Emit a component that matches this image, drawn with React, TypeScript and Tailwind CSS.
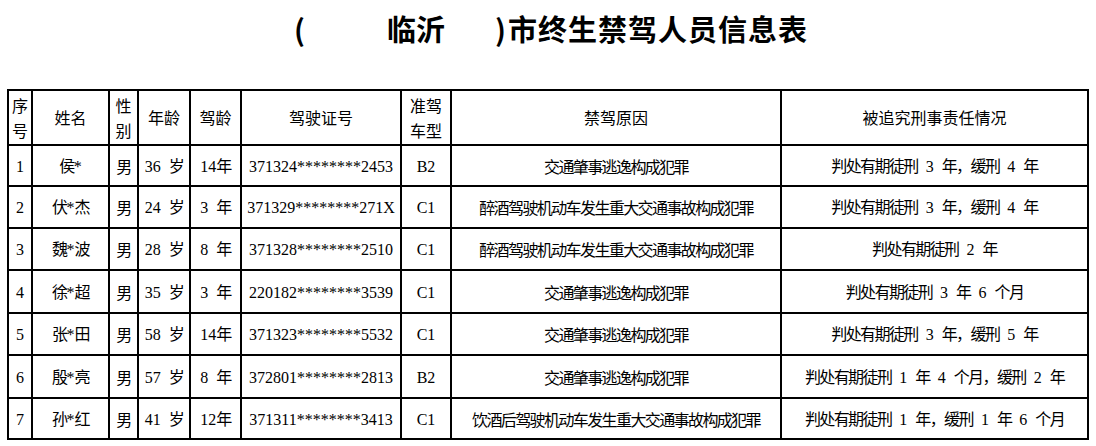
import React from 'react';

type Row = {
  no: string;
  name: string;
  sex: string;
  age: string;
  years: string;
  license: string;
  type: string;
  reason: string;
  penalty: string;
};

const rows: Row[] = [
  { no: '1', name: '侯*', sex: '男', age: '36 岁', years: '14年', license: '371324********2453', type: 'B2', reason: '交通肇事逃逸构成犯罪', penalty: '判处有期徒刑 3 年，缓刑 4 年' },
  { no: '2', name: '伏*杰', sex: '男', age: '24 岁', years: '3 年', license: '371329********271X', type: 'C1', reason: '醉酒驾驶机动车发生重大交通事故构成犯罪', penalty: '判处有期徒刑 3 年，缓刑 4 年' },
  { no: '3', name: '魏*波', sex: '男', age: '28 岁', years: '8 年', license: '371328********2510', type: 'C1', reason: '醉酒驾驶机动车发生重大交通事故构成犯罪', penalty: '判处有期徒刑 2 年' },
  { no: '4', name: '徐*超', sex: '男', age: '35 岁', years: '3 年', license: '220182********3539', type: 'C1', reason: '交通肇事逃逸构成犯罪', penalty: '判处有期徒刑 3 年 6 个月' },
  { no: '5', name: '张*田', sex: '男', age: '58 岁', years: '14年', license: '371323********5532', type: 'C1', reason: '交通肇事逃逸构成犯罪', penalty: '判处有期徒刑 3 年，缓刑 5 年' },
  { no: '6', name: '殷*亮', sex: '男', age: '57 岁', years: '8 年', license: '372801********2813', type: 'B2', reason: '交通肇事逃逸构成犯罪', penalty: '判处有期徒刑 1 年 4 个月，缓刑 2 年' },
  { no: '7', name: '孙*红', sex: '男', age: '41 岁', years: '12年', license: '371311********3413', type: 'C1', reason: '饮酒后驾驶机动车发生重大交通事故构成犯罪', penalty: '判处有期徒刑 1 年，缓刑 1 年 6 个月' },
];

const rowHeights = ['h-[41px]', 'h-[42px]', 'h-[42px]', 'h-[43px]', 'h-[42px]', 'h-[43px]', 'h-[41px]'];

const th = 'border-2 border-black p-0 text-center align-middle font-normal';
const td = 'border-2 border-black p-0 text-center align-middle whitespace-nowrap';

// half-width runs (digits, *, spaces) in a serif face, CJK runs condensed
function Mixed({ text }: { text: string }) {
  const parts = text.match(/[\x00-\x7f]+|[^\x00-\x7f]+/g) ?? [];
  return (
    <>
      {parts.map((p, i) =>
        /^[\x00-\x7f]/.test(p) ? (
          <span key={i} className="font-['Liberation_Serif',serif] tracking-normal [word-spacing:4px]">{p}</span>
        ) : (
          <span key={i} className="tracking-[-1.6px]">{p}</span>
        )
      )}
    </>
  );
}

export default function App() {
  return (
    <div className="w-[1096px] h-[446px] bg-white text-black overflow-hidden">
      {/* title */}
      <div className="h-[56px] flex items-center pl-[294px] text-[29px] font-bold leading-none font-['Noto_Sans_CJK_SC',sans-serif]">
        <span>(</span>
        <span className="ml-[82px]">临沂</span>
        <span className="ml-[50px]">)</span>
        <span className="ml-[2px] tracking-[1px]">市终生禁驾人员信息表</span>
      </div>

      <table className="ml-[7px] mt-[33px] w-[1082px] table-fixed border-collapse">
        <colgroup>
          <col className="w-[24px]" />
          <col className="w-[77px]" />
          <col className="w-[29px]" />
          <col className="w-[52px]" />
          <col className="w-[51px]" />
          <col className="w-[160px]" />
          <col className="w-[50px]" />
          <col className="w-[330px]" />
          <col className="w-[307px]" />
        </colgroup>
        <thead>
          <tr className="h-[55px] text-[16px] leading-[25px] font-['Noto_Sans_CJK_SC',sans-serif]">
            <th className={th}>序<br />号</th>
            <th className={th}>姓名</th>
            <th className={th}>性<br />别</th>
            <th className={th}>年龄</th>
            <th className={th}>驾龄</th>
            <th className={th}>驾驶证号</th>
            <th className={th}>准驾<br />车型</th>
            <th className={th}>禁驾原因</th>
            <th className={th}>被追究刑事责任情况</th>
          </tr>
        </thead>
        <tbody className="text-[16px] leading-[20px] font-['Noto_Sans_CJK_SC',sans-serif]">
          {rows.map((r, i) => (
            <tr key={r.no} className={rowHeights[i]}>
              <td className={td}><Mixed text={r.no} /></td>
              <td className={td}><Mixed text={r.name} /></td>
              <td className={td}><Mixed text={r.sex} /></td>
              <td className={td}><Mixed text={r.age} /></td>
              <td className={td}><Mixed text={r.years} /></td>
              <td className={td}><Mixed text={r.license} /></td>
              <td className={td}><Mixed text={r.type} /></td>
              <td className={td}><Mixed text={r.reason} /></td>
              <td className={td}><Mixed text={r.penalty} /></td>
            </tr>
          ))}
        </tbody>
      </table>
    </div>
  );
}
